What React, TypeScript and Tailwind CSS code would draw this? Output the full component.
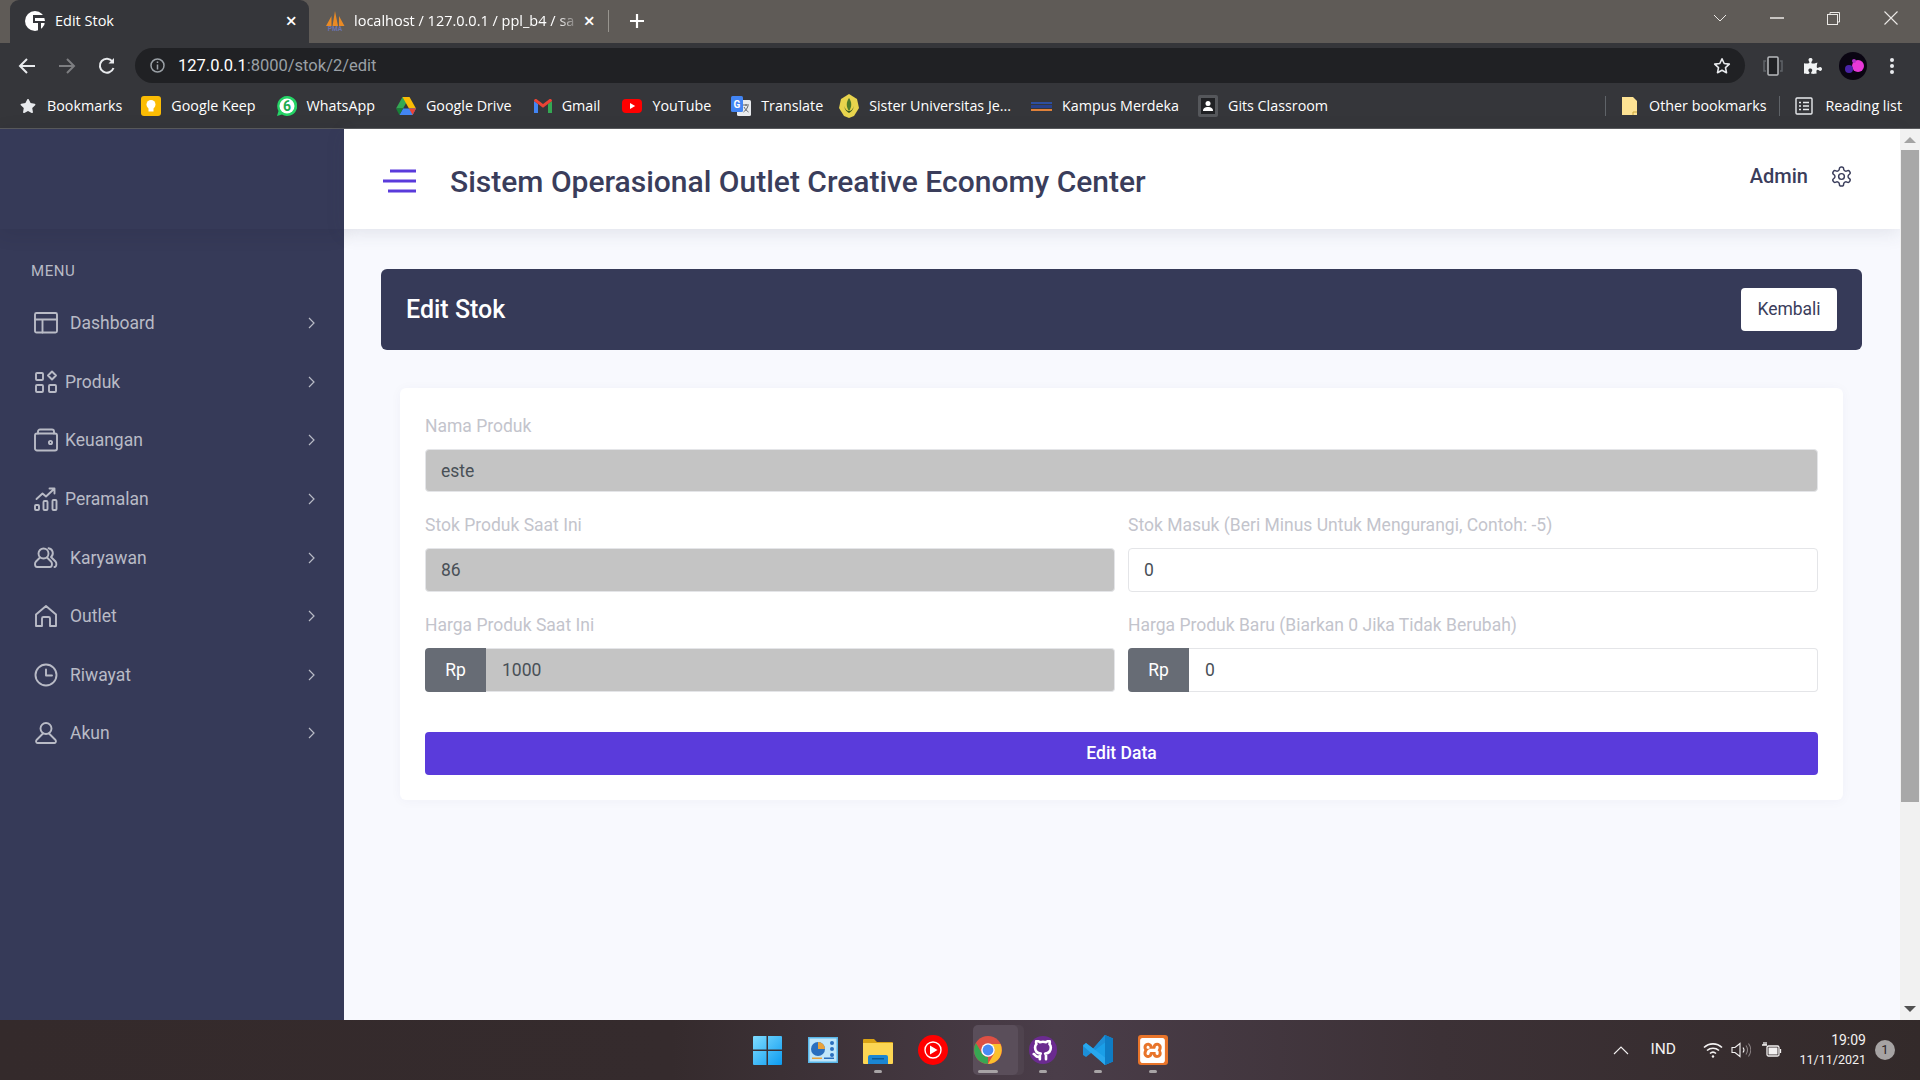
import { ReactNode } from "react";
import { FaPuzzlePiece, FaStar } from "react-icons/fa";
import { FiGithub } from "react-icons/fi";
import { SiXampp } from "react-icons/si";
import { LuSettings } from "react-icons/lu";

const uiFont = "font-['Open_Sans',sans-serif]";

function Ico({ children, w = 24, h = 24, vb }: { children: ReactNode; w?: number; h?: number; vb?: string }) {
  return (
    <svg
      width={w}
      height={h}
      viewBox={vb ?? `0 0 ${w} ${h}`}
      fill="none"
      stroke="currentColor"
      strokeWidth={1.9}
      strokeLinecap="round"
      strokeLinejoin="round"
      className="shrink-0"
    >
      {children}
    </svg>
  );
}

const menu: { label: string; gap: string; icon: ReactNode }[] = [
  {
    label: "Dashboard",
    gap: "ml-[12px]",
    icon: (
      <Ico>
        <rect x="1" y="2" width="22" height="19.500" rx="1.500" />
        <path d="M1 8.500h22M8.500 8.500v13" />
      </Ico>
    ),
  },
  {
    label: "Produk",
    gap: "ml-[7px]",
    icon: (
      <Ico>
        <rect x="2" y="3" width="7" height="7" rx="1" />
        <path d="M18 1.500l4 4-4 4-4-4z" />
        <rect x="2" y="15" width="7" height="7" rx="1" />
        <rect x="15" y="15" width="7" height="7" rx="1" />
      </Ico>
    ),
  },
  {
    label: "Keuangan",
    gap: "ml-[7px]",
    icon: (
      <Ico>
        <rect x="1" y="5.500" width="22" height="17" rx="2" />
        <path d="M4 5.500V3.500a2 2 0 0 1 2-2h12a2 2 0 0 1 2 2v2" />
        <circle cx="16.500" cy="14.500" r="1.600" />
      </Ico>
    ),
  },
  {
    label: "Peramalan",
    gap: "ml-[7px]",
    icon: (
      <Ico>
        <rect x="1" y="18" width="4" height="5" rx="1" />
        <rect x="9.500" y="14" width="4" height="9" rx="1" />
        <rect x="18.500" y="13" width="4" height="10" rx="1" />
        <path d="M2.500 12l6-5.500 3.500 3 8-7.500M15.500 1.500H20.500V6.500" />
      </Ico>
    ),
  },
  {
    label: "Karyawan",
    gap: "ml-[12px]",
    icon: (
      <Ico>
        <circle cx="9.500" cy="7.500" r="5" />
        <path d="M6 11.500l-4 4c-1.500 1.500-1.300 5.500 1 5.500h13c2.300 0 2.500-4 1-5.500l-4-4" />
        <path d="M14.500 2.200a5 5 0 0 1 2.500 8.800l4.500 4.500c1.300 1.300 1.300 5.500-1 5.500" />
      </Ico>
    ),
  },
  {
    label: "Outlet",
    gap: "ml-[12px]",
    icon: (
      <Ico>
        <path d="M2 22V10.500L12 2l10 8.500V22h-6v-7.500a1.500 1.500 0 0 0-1.500-1.500h-5A1.500 1.500 0 0 0 8 14.500V22z" />
      </Ico>
    ),
  },
  {
    label: "Riwayat",
    gap: "ml-[12px]",
    icon: (
      <Ico>
        <circle cx="12" cy="12" r="10.500" />
        <path d="M12 6.500V12.500H18" />
      </Ico>
    ),
  },
  {
    label: "Akun",
    gap: "ml-[12px]",
    icon: (
      <Ico>
        <circle cx="12" cy="7.500" r="5.500" />
        <path d="M9 12.500L2.500 19c-.8 1-.5 3 1 3h17c1.500 0 1.800-2 1-3L15 12.500" />
      </Ico>
    ),
  },
];

const bookmarks: { label: string; pl: string; icon: ReactNode }[] = [
  {
    label: "Google Keep",
    pl: "ml-[19px]",
    icon: (
      <svg width="20" height="20" viewBox="0 0 20 20" className="shrink-0">
        <rect width="20" height="20" rx="3" fill="#fbbc04" />
        <circle cx="10" cy="8.500" r="4.500" fill="#fff" />
        <rect x="7.500" y="12" width="5" height="3.500" fill="#fff" />
      </svg>
    ),
  },
  {
    label: "WhatsApp",
    pl: "ml-[21px]",
    icon: (
      <svg width="20" height="20" viewBox="0 0 20 20" className="shrink-0">
        <path d="M10 0a10 10 0 0 0-8.500 15L0 20l5-1.500A10 10 0 1 0 10 0z" fill="#25d366" />
        <circle cx="10" cy="10" r="7.500" fill="#fff" />
        <text x="10" y="15" textAnchor="middle" fontSize="14" fontWeight="700" fill="#1faa50" fontFamily="Roboto, sans-serif">
          6
        </text>
      </svg>
    ),
  },
  {
    label: "Google Drive",
    pl: "ml-[21px]",
    icon: (
      <svg width="20" height="18" viewBox="0 0 20 18" className="shrink-0">
        <path d="M6.500 0h7L7 11.500H0z" fill="#34a853" />
        <path d="M6.500 0h7L20 11.500h-7z" fill="#fbbc04" />
        <path d="M3.400 18L7 11.500h13L16.600 18z" fill="#4285f4" />
        <path d="M0 11.500h7L3.400 18z" fill="#188038" />
        <path d="M13 11.500h7L16.600 18z" fill="#ea4335" />
      </svg>
    ),
  },
  {
    label: "Gmail",
    pl: "ml-[22px]",
    icon: (
      <svg width="18" height="14" viewBox="0 0 18 14" className="shrink-0">
        <path d="M0 2v12h4V5z" fill="#4285f4" />
        <path d="M18 2v12h-4V5z" fill="#34a853" />
        <path d="M0 2c0-2 2-2.500 3-1.500L9 5l6-4.500c1-1 3-.5 3 1.500l-4 3-5 3.800L4 5z" fill="#ea4335" />
      </svg>
    ),
  },
  {
    label: "YouTube",
    pl: "ml-[22px]",
    icon: (
      <svg width="20" height="14" viewBox="0 0 20 14" className="shrink-0">
        <rect width="20" height="14" rx="4" fill="#f00" />
        <path d="M8 4l5.200 3L8 10z" fill="#fff" />
      </svg>
    ),
  },
  {
    label: "Translate",
    pl: "ml-[20px]",
    icon: (
      <svg width="20" height="20" viewBox="0 0 20 20" className="shrink-0">
        <rect x="6" y="4" width="14" height="16" rx="1.500" fill="#e8eaed" />
        <rect width="12" height="16" rx="1.500" fill="#4285f4" />
        <text x="6" y="12" textAnchor="middle" fontSize="10" fontWeight="700" fill="#fff" fontFamily="Roboto, sans-serif">
          G
        </text>
        <path d="M12 9h6M15 8v2M17 10c-1 3-3 5-4.500 6M13 11c1 2 3 4 4.500 5" stroke="#5f6368" strokeWidth="1" fill="none" />
      </svg>
    ),
  },
  {
    label: "Sister Universitas Je...",
    pl: "ml-[16px]",
    icon: (
      <svg width="20" height="24" viewBox="0 0 20 24" className="shrink-0">
        <path d="M10 0l8 5 2 9-5 8-5 2-5-2-5-8 2-9z" fill="#e8d44d" />
        <path d="M10 4c-3 4-3 9 0 13 3-4 3-9 0-13z" fill="#4d7a2a" />
        <path d="M5 12c1 4 3 6 5 7 2-1 4-3 5-7-1 3-3 5-5 5s-4-2-5-5z" fill="#3a5a1e" />
      </svg>
    ),
  },
  {
    label: "Kampus Merdeka",
    pl: "ml-[20px]",
    icon: (
      <svg width="21" height="14" viewBox="0 0 21 14" className="shrink-0">
        <rect y="3" width="21" height="2" fill="#2d4fa0" />
        <rect y="6" width="21" height="3" fill="#27408b" />
        <rect y="10" width="21" height="2" fill="#e0813a" />
      </svg>
    ),
  },
  {
    label: "Gits Classroom",
    pl: "ml-[19px]",
    icon: (
      <svg width="20" height="22" viewBox="0 0 20 22" className="shrink-0">
        <rect width="20" height="22" rx="2" fill="#55575b" />
        <rect x="3" y="3" width="14" height="16" fill="#202124" />
        <circle cx="10" cy="8.500" r="2.500" fill="#fff" />
        <path d="M5 16c0-3 2-4 5-4s5 1 5 4z" fill="#fff" />
      </svg>
    ),
  },
];

function Field({ label, children }: { label: string; children: ReactNode }) {
  return (
    <div className="min-w-0 flex-1 mb-[20px]">
      <label className="block h-[24px] pt-px leading-[24px] mb-[12px] text-[17.500px] text-[#c3c4cc]">{label}</label>
      {children}
    </div>
  );
}

function TextInput({ value, disabled, className }: { value: string; disabled?: boolean; className?: string }) {
  return (
    <input
      readOnly
      value={value}
      className={`w-full text-[17.500px] text-[#495057] border border-[#e4e5e8] rounded-[4px] outline-none ${
        disabled ? "bg-[#c4c4c4]" : "bg-white"
      } ${className ?? "h-[44px] px-[15px]"}`}
    />
  );
}

function RpInput({ value, disabled }: { value: string; disabled?: boolean }) {
  return (
    <div className="flex h-[44px]">
      <span className="w-[61px] shrink-0 flex items-center justify-center bg-[#676c75] text-white text-[17.500px] rounded-l-[4px]">
        Rp
      </span>
      <TextInput value={value} disabled={disabled} className="h-[44px] px-[16px] rounded-l-none border-l-0" />
    </div>
  );
}

function TabStrip() {
  return (
    <div className={`h-[43px] shrink-0 bg-[#5f5b57] flex items-start text-white text-[14.500px] ${uiFont}`}>
      <div className="ml-[10px] w-[299px] h-[43px] pb-[1px] bg-[#35363a] rounded-t-[9px] flex items-center pl-[15px] pr-[12px]">
        <svg width="20" height="20" viewBox="0 0 20 20" className="shrink-0">
          <circle cx="10" cy="10" r="10" fill="#fff" />
          <path d="M8 4h12v3H10v3h10v2h-4v8h-3v-8H8z" fill="#35363a" />
        </svg>
        <span className="ml-[10px] flex-1">Edit Stok</span>
        <span className="text-[20px] leading-none font-semibold">×</span>
      </div>
      <div className="w-[299px] h-[43px] pb-[1px] flex items-center pl-[16px] pr-[13px]">
        <svg width="20" height="20" viewBox="0 0 20 20" className="shrink-0">
          <path d="M1 15L6.500 5v10zM7.500 15L10 0l3 15zM14 15V5l5.500 10z" fill="#e98a25" />
          <text x="10" y="20" textAnchor="middle" fontSize="6.500" fontWeight="700" fill="#6a74b0" fontFamily="Roboto, sans-serif">
            PMA
          </text>
        </svg>
        <span className="ml-[9px] flex-1 whitespace-nowrap [mask-image:linear-gradient(to_right,black_90%,transparent)]">
          localhost / 127.0.0.1 / ppl_b4 / sa
        </span>
        <span className="ml-[4px] text-[20px] leading-none font-semibold">×</span>
      </div>
      <div className="w-px h-[22px] mt-[10px] bg-[#98958f]" />
      <svg width="16" height="16" viewBox="0 0 16 16" className="ml-[20px] mt-[13px] shrink-0" stroke="#fff" strokeWidth="2.200">
        <path d="M8 1v14M1 8h14" />
      </svg>
      <div className="flex-1" />
      <div className="flex items-center h-[36px] text-[#ebe9e6]">
        <svg width="14" height="8" viewBox="0 0 14 8" fill="none" stroke="currentColor" strokeWidth="1">
          <path d="M1 1l6 6 6-6" />
        </svg>
        <svg width="14" height="2" viewBox="0 0 14 2" className="ml-[43px]" stroke="currentColor" strokeWidth="1.500">
          <path d="M0 1h14" />
        </svg>
        <svg width="13" height="13" viewBox="0 0 13 13" className="ml-[43px]" fill="none" stroke="currentColor" strokeWidth="1">
          <rect x="0.500" y="2.500" width="10" height="10" />
          <path d="M3 2.500V.500h9.500V10h-2" />
        </svg>
        <svg width="14" height="14" viewBox="0 0 14 14" className="ml-[44px] mr-[22px]" stroke="currentColor" strokeWidth="1.100">
          <path d="M.500.500l13 13M13.500.500l-13 13" />
        </svg>
      </div>
    </div>
  );
}

function FaStarOutline() {
  return (
    <svg width="18" height="18" viewBox="0 0 18 18" fill="none" stroke="#e8eaed" strokeWidth="1.600" strokeLinejoin="round">
      <path d="M9 1.800l2.200 4.700 5.100.6-3.800 3.500 1 5.100L9 13.200l-4.500 2.500 1-5.100L1.700 7.100l5.100-.6z" />
    </svg>
  );
}

function Toolbar() {
  return (
    <div className={`h-[45px] shrink-0 bg-[#35363a] flex items-start pt-[5px] text-white ${uiFont}`}>
      <div className="w-[135px] h-[35px] shrink-0 flex items-center">
        <svg width="18" height="18" viewBox="0 0 18 18" className="ml-[18px]" fill="none" stroke="#e8eaed" strokeWidth="2">
          <path d="M17 9H2M9 2L2 9l7 7" />
        </svg>
        <svg width="18" height="18" viewBox="0 0 18 18" className="ml-[22px]" fill="none" stroke="#7d7e81" strokeWidth="2">
          <path d="M1 9h15M9 2l7 7-7 7" />
        </svg>
        <svg width="18" height="18" viewBox="0 0 18 18" className="ml-[22px]" fill="none" stroke="#e8eaed" strokeWidth="2">
          <path d="M15.500 11a7 7 0 1 1-1-6.500" />
          <path d="M16 1v5.500h-5.500z" fill="#e8eaed" stroke="none" />
        </svg>
      </div>
      <div className="w-[1610px] h-[35px] bg-[#202124] rounded-full flex items-center pl-[15px] pr-[14px]">
        <svg width="15" height="15" viewBox="0 0 15 15" fill="none" stroke="#9aa0a6" strokeWidth="1.500" className="shrink-0">
          <circle cx="7.500" cy="7.500" r="6.500" />
          <path d="M7.500 6.500v5M7.500 3.500v1.500" />
        </svg>
        <span className="ml-[13px] mt-[2px] text-[16.500px] font-[Roboto,sans-serif] text-white">
          127.0.0.1<span className="text-[#9aa0a6]">:8000/stok/2/edit</span>
        </span>
        <div className="flex-1" />
        <FaStarOutline />
      </div>
      <div className="flex items-center h-[35px]">
        <svg width="20" height="20" viewBox="0 0 20 20" className="ml-[18px]" fill="none">
          <path d="M3 5H1v10h2M17 5h2v10h-2" stroke="#5f6368" strokeWidth="1.500" />
          <rect x="5" y="1" width="10" height="18" rx="1" fill="#202124" stroke="#b8babd" strokeWidth="1.500" />
        </svg>
        <FaPuzzlePiece className="ml-[21px] w-[18px] h-[18px] text-[#f1f3f4]" />
        <svg width="28" height="28" viewBox="0 0 28 28" className="ml-[17px]">
          <circle cx="14" cy="14" r="14" fill="#0a0512" />
          <circle cx="19" cy="14" r="6" fill="#e838d8" />
          <circle cx="10" cy="17" r="4" fill="#4a23a8" />
          <circle cx="15" cy="9" r="2" fill="#b030c8" />
        </svg>
        <svg width="4" height="16" viewBox="0 0 4 16" className="ml-[23px]" fill="#e8eaed">
          <circle cx="2" cy="2" r="2" />
          <circle cx="2" cy="8" r="2" />
          <circle cx="2" cy="14" r="2" />
        </svg>
      </div>
    </div>
  );
}

function BookmarksBar() {
  return (
    <div
      className={`h-[41px] shrink-0 bg-[#35363a] border-b border-[#5a5b5e] flex items-center pb-[5px] text-white text-[14.300px] whitespace-nowrap ${uiFont}`}
    >
      <FaStar className="ml-[20px] w-[16px] h-[16px] text-[#e8eaed]" />
      <span className="ml-[11px]">Bookmarks</span>
      {bookmarks.map((b) => (
        <div key={b.label} className={`flex items-center gap-[10px] ${b.pl}`}>
          {b.icon}
          <span>{b.label}</span>
        </div>
      ))}
      <div className="flex-1" />
      <div className="w-px h-[20px] bg-[#5f6368]" />
      <svg width="15" height="18" viewBox="0 0 15 18" className="ml-[16px]">
        <path d="M0 0h11l4 4v14H0z" fill="#fde293" />
        <path d="M11 18v-3h4" fill="none" stroke="#caa53d" />
      </svg>
      <span className="ml-[12px]">Other bookmarks</span>
      <div className="w-px h-[20px] ml-[13px] bg-[#5f6368]" />
      <svg width="18" height="18" viewBox="0 0 18 18" className="ml-[15px]" fill="none" stroke="#e8eaed" strokeWidth="1.400">
        <rect x="1" y="1" width="16" height="16" rx="1" />
        <path d="M4 5.500h2M8 5.500h6M4 9h2M8 9h6M4 12.500h2M8 12.500h6" />
      </svg>
      <span className="ml-[12px] mr-[18px]">Reading list</span>
    </div>
  );
}

function Sidebar() {
  return (
    <aside className="w-[344px] shrink-0 bg-[#363a58] text-[#b9bbc6]">
      <div className="h-[100px] relative shadow-[0_4px_18px_rgba(30,30,50,0.14)]" />
      <div className="pl-[31px] mt-[33px] text-[15px] leading-[18px] tracking-[0.6px]">MENU</div>
      <nav className="mt-[14px]">
        {menu.map((m) => (
          <div key={m.label} className="h-[58.600px] flex items-center pl-[34px] pr-[29px]">
            {m.icon}
            <span className={`text-[17.500px] flex-1 ${m.gap}`}>{m.label}</span>
            <svg width="7" height="12" viewBox="0 0 7 12" fill="none" stroke="currentColor" strokeWidth="1.200">
              <path d="M1 1l5 5-5 5" />
            </svg>
          </div>
        ))}
      </nav>
    </aside>
  );
}

function Content() {
  return (
    <main className="flex-1 min-w-0 bg-[#f8f9fe] flex flex-col">
      <header className="h-[100px] shrink-0 bg-white flex items-center pt-[4px] pl-[39px] pr-[47px] shadow-[0_4px_18px_rgba(60,62,90,0.12)] relative">
        <svg width="33" height="24" viewBox="0 0 33 24" stroke="#5a3bdb" strokeWidth="3" className="shrink-0">
          <path d="M7 2h26M0 12h33M5 22h28" />
        </svg>
        <h1 className="ml-[34px] flex-1 text-[30px] font-medium text-[#3a3d5b]">
          Sistem Operasional Outlet Creative Economy Center
        </h1>
        <span className="text-[20px] font-medium text-[#3a3d5b] mt-[-10px]">Admin</span>
        <LuSettings className="ml-[22px] mt-[-10px] w-[23px] h-[23px] text-[#3a3d5b]" strokeWidth={1.500} />
      </header>

      <section className="mt-[40px] ml-[37px] mr-[38px] h-[81px] rounded-[6px] bg-[#363a58] flex items-center justify-between pl-[25px] pr-[25px]">
        <h2 className="text-[25px] font-medium text-white">Edit Stok</h2>
        <button className="h-[43px] w-[96px] rounded-[4px] bg-white text-[17.500px] text-[#3a3d5b]">Kembali</button>
      </section>

      <section className="mt-[38px] ml-[56px] mr-[57px] pt-[25px] pb-[25px] px-[25px] rounded-[6px] bg-white shadow-[0_1px_12px_rgba(60,62,90,0.04)]">
        <Field label="Nama Produk">
          <TextInput value="este" disabled className="h-[43px] px-[15px]" />
        </Field>
        <div className="flex gap-[13px]">
          <Field label="Stok Produk Saat Ini">
            <TextInput value="86" disabled />
          </Field>
          <Field label="Stok Masuk (Beri Minus Untuk Mengurangi, Contoh: -5)">
            <TextInput value="0" />
          </Field>
        </div>
        <div className="flex gap-[13px]">
          <Field label="Harga Produk Saat Ini">
            <RpInput value="1000" disabled />
          </Field>
          <Field label="Harga Produk Baru (Biarkan 0 Jika Tidak Berubah)">
            <RpInput value="0" />
          </Field>
        </div>
        <button className="mt-[20px] w-full h-[43px] rounded-[4px] bg-[#5a3bdb] text-white text-[17.500px] font-medium">
          Edit Data
        </button>
      </section>
    </main>
  );
}

function Scrollbar() {
  return (
    <div className="w-[20px] shrink-0 bg-[#f1f1f1] flex flex-col items-center relative">
      <svg width="12" height="6" viewBox="0 0 12 6" className="mt-[8px]" fill="#a3a3a3">
        <path d="M6 0l6 6H0z" />
      </svg>
      <div className="mt-[7px] w-[18px] h-[652px] bg-[#a8a8a8]" />
      <div className="flex-1" />
      <svg width="12" height="6" viewBox="0 0 12 6" className="mb-[8px]" fill="#505050">
        <path d="M6 6l6-6H0z" />
      </svg>
    </div>
  );
}

function Dot({ wide }: { wide?: boolean }) {
  return <div className={`h-[3px] rounded-full bg-[#a8a4a6] ${wide ? "w-[20px]" : "w-[8px]"}`} />;
}

function TaskIcon({ children, dot, wide }: { children: ReactNode; dot?: boolean; wide?: boolean }) {
  return (
    <div className="w-[55px] h-[60px] flex flex-col items-center relative">
      <div className="h-[30px] mt-[15px] flex items-center justify-center">{children}</div>
      {dot && (
        <div className="absolute top-[50px]">
          <Dot wide={wide} />
        </div>
      )}
    </div>
  );
}

function Taskbar() {
  return (
    <div className="h-[60px] shrink-0 flex items-stretch bg-[linear-gradient(90deg,#342a2b_0%,#352b2d_35%,#4a3d49_55%,#3c3136_75%,#332a2a_100%)] font-[Roboto,sans-serif]">
      <div className="pl-[740px] flex">
        <TaskIcon>
          <svg width="29" height="29" viewBox="0 0 29 29">
            <defs>
              <linearGradient id="win" x1="0" y1="0" x2="1" y2="1">
                <stop offset="0" stopColor="#7fdcff" />
                <stop offset="1" stopColor="#0c9bf0" />
              </linearGradient>
            </defs>
            <path d="M1 0h12.500v13.500H0V1a1 1 0 0 1 1-1zM15 0h13a1 1 0 0 1 1 1v12.500H15zM0 15h13.500v14H1a1 1 0 0 1-1-1zM15 15h14v13a1 1 0 0 1-1 1H15z" fill="url(#win)" />
          </svg>
        </TaskIcon>
        <TaskIcon>
          <svg width="30" height="26" viewBox="0 0 30 26">
            <rect width="30" height="26" fill="#58b6e8" />
            <rect x="1.500" y="1.500" width="27" height="23" fill="#bfe6fa" />
            <circle cx="10" cy="12" r="7" fill="#2a6fbe" />
            <path d="M10 12V5a7 7 0 0 1 7 7z" fill="#e8a23a" />
            <circle cx="24" cy="6" r="2" fill="#2a6fbe" />
            <circle cx="24" cy="12" r="2" fill="#2a6fbe" />
            <circle cx="24" cy="18" r="2" fill="#2a6fbe" />
            <rect x="4" y="20.500" width="10" height="1.500" fill="#e8a23a" />
            <rect x="16" y="20.500" width="10" height="1.500" fill="#2a6fbe" />
          </svg>
        </TaskIcon>
        <TaskIcon dot>
          <svg width="30" height="27" viewBox="0 0 30 27">
            <path d="M0 3a1 1 0 0 1 1-1h10l3 3h15a1 1 0 0 1 1 1v4H0z" fill="#d9a314" />
            <path d="M0 6h30v20a1 1 0 0 1-1 1H1a1 1 0 0 1-1-1z" fill="#fcd653" />
            <path d="M5 27v-7a2 2 0 0 1 2-2h16a2 2 0 0 1 2 2v7z" fill="#1b86d3" />
            <rect x="9" y="21" width="12" height="1.500" fill="#0c5a96" />
          </svg>
        </TaskIcon>
        <TaskIcon>
          <svg width="30" height="30" viewBox="0 0 30 30">
            <circle cx="15" cy="15" r="15" fill="#f00" />
            <circle cx="15" cy="15" r="8" fill="none" stroke="#fff" strokeWidth="1.400" />
            <path d="M12 10.500l7.500 4.500-7.500 4.500z" fill="#fff" />
          </svg>
        </TaskIcon>
        <div className="w-[55px] h-[60px] flex flex-col items-center relative">
          <div className="absolute left-[13px] top-[5px] w-[45px] h-[50px] rounded-[5px] bg-[#5a4e5a] shadow-[6px_0_0_#4f434e]" />
          <div className="relative h-[30px] mt-[15px] flex items-center justify-center">
            <svg width="28" height="28" viewBox="0 0 28 28">
              <circle cx="14" cy="14" r="14" fill="#dd5044" />
              <path d="M14 8h12.400A14 14 0 0 1 14 28l6.200-10.700A7 7 0 0 0 14 8z" fill="#fbc02d" />
              <path d="M1.900 7L8 17.500A7 7 0 0 0 14 21l-.1 7A14 14 0 0 1 1.900 7z" fill="#37a753" />
              <circle cx="14" cy="14" r="6.800" fill="#fff" />
              <circle cx="14" cy="14" r="5.400" fill="#4a8af4" />
            </svg>
          </div>
          <div className="absolute top-[50px]">
            <Dot wide />
          </div>
        </div>
        <TaskIcon dot>
          <div className="w-[28px] h-[28px] rounded-full bg-[#6b2b90] flex items-center justify-center">
            <FiGithub className="w-[21px] h-[21px] text-white" strokeWidth={3} />
          </div>
        </TaskIcon>
        <TaskIcon dot>
          <svg width="30" height="30" viewBox="0 0 30 30">
            <path d="M22 0l8 3.500v23L22 30 8 16.500z" fill="#1a9fe8" />
            <path d="M22 0v30l8-3.500v-23z" fill="#0e7cc4" />
            <path d="M22 7.500L10 16.500 3 22 0 20v-10l3-2 7 5.500 12-13.500z" fill="#1c8fd8" />
            <path d="M3 8L22 22.500V30L0 11z" fill="#28a8ee" />
          </svg>
        </TaskIcon>
        <TaskIcon dot>
          <div className="w-[30px] h-[30px] rounded-[3px] bg-[#e8742a] flex items-center justify-center">
            <SiXampp className="w-[25px] h-[25px] text-white" />
          </div>
        </TaskIcon>
      </div>
      <div className="flex-1" />
      <div className="flex items-center text-[#f3f1f1]">
        <svg width="16" height="9" viewBox="0 0 16 9" fill="none" stroke="currentColor" strokeWidth="1.100">
          <path d="M1 8l7-7 7 7" />
        </svg>
        <span className="ml-[22px] text-[15.500px]">IND</span>
        <svg width="20" height="16" viewBox="0 0 20 16" className="ml-[27px]" fill="none" stroke="currentColor" strokeWidth="1.600">
          <path d="M1 5.500a13 13 0 0 1 18 0M4 8.500a9 9 0 0 1 12 0M7 11.500a4.500 4.500 0 0 1 6 0" />
          <circle cx="10" cy="14.500" r="1.200" fill="currentColor" stroke="none" />
        </svg>
        <svg width="20" height="16" viewBox="0 0 20 16" className="ml-[8px]" fill="none" stroke="currentColor" strokeWidth="1.100">
          <path d="M1 5.500h3L9 1.500v13l-5-4H1z" />
          <path d="M12 5.500a4 4 0 0 1 0 5" />
          <path d="M15 3.500a8 8 0 0 1 0 9M17.500 1.500a11 11 0 0 1 0 13" stroke="#8b8385" />
        </svg>
        <svg width="20" height="16" viewBox="0 0 20 16" className="ml-[11px]" fill="none" stroke="currentColor" strokeWidth="1.300">
          <rect x="5" y="4" width="12" height="10" rx="1.500" />
          <rect x="6.500" y="5.500" width="9" height="7" fill="currentColor" stroke="none" />
          <path d="M18.500 7v4" />
          <path d="M0 3h5M2 0v3M4 0v3" />
        </svg>
        <div className="ml-[14px] w-[70px] text-right leading-[20px]">
          <div className="text-[14px]">19:09</div>
          <div className="whitespace-nowrap text-[12.500px]">11/11/2021</div>
        </div>
        <div className="ml-[9px] mr-[25px] w-[20px] h-[20px] rounded-full bg-[#a6a3a3] text-[#2d2627] text-[13px] flex items-center justify-center">
          1
        </div>
      </div>
    </div>
  );
}

export default function App() {
  return (
    <div className="h-screen w-full overflow-hidden flex flex-col font-[Roboto,sans-serif]">
      <TabStrip />
      <Toolbar />
      <BookmarksBar />
      <div className="flex-1 min-h-0 flex">
        <Sidebar />
        <Content />
        <Scrollbar />
      </div>
      <Taskbar />
    </div>
  );
}
